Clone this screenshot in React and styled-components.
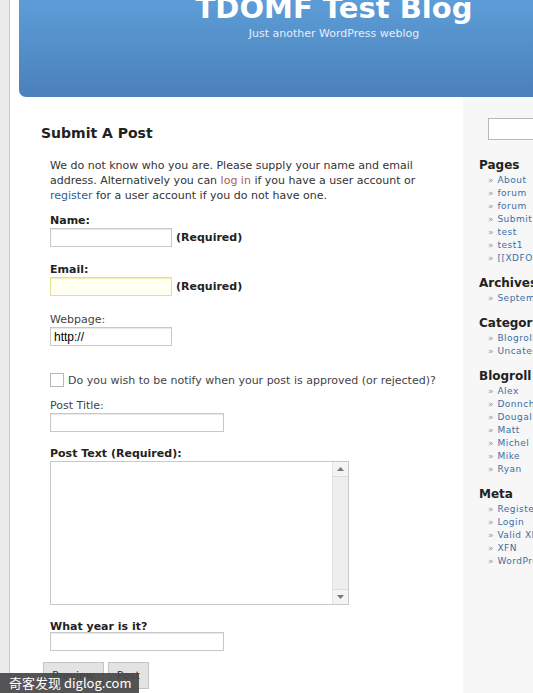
import React from 'react'
import styled, { createGlobalStyle } from 'styled-components'

const GlobalStyle = createGlobalStyle`
  html, body {
    margin: 0;
    padding: 0;
    background: #fff;
  }
  body {
    font-family: 'DejaVu Sans', Verdana, sans-serif;
    font-size: 11px;
    color: #333;
    height: 693px;
    overflow: hidden;
  }
`

const Page = styled.div`
  position: relative;
  display: flex;
  height: 693px;
  overflow: hidden;
`
const Strip = styled.div`
  width: 9px;
  flex: none;
  background: #ececec;
  border-right: 1px solid #c9c9c9;
`
const Wrap = styled.div`
  flex: 1;
  display: flex;
  flex-direction: column;
  min-width: 0;
`
const Header = styled.header`
  margin-left: 9px;
  height: 97px;
  flex: none;
  border-bottom-left-radius: 7px;
  background: linear-gradient(#5d9dd7, #4a80bb);
  display: flex;
  flex-direction: column;
  align-items: center;
  padding-left: 116px;
  box-sizing: border-box;
`
const Title = styled.h1`
  margin: -9px 0 0;
  font-family: 'DejaVu Sans', Verdana, sans-serif;
  font-weight: bold;
  font-size: 29px;
  line-height: 34px;
  color: #fff;
  white-space: nowrap;
`
const Tagline = styled.div`
  margin-top: 2px;
  font-size: 11px;
  color: #e4eef9;
`
const Body = styled.div`
  flex: 1;
  display: grid;
  grid-template-columns: 453px 1fr;
`
const Content = styled.main`
  padding: 28px 0 0 31px;
`
const Heading = styled.h2`
  margin: 0 0 16px;
  font-family: 'DejaVu Sans', Verdana, sans-serif;
  font-size: 14px;
  line-height: 17px;
  font-weight: bold;
  color: #222;
`
const Form = styled.form`
  padding-left: 9px;
  display: flex;
  flex-direction: column;
  align-items: flex-start;
`
const Intro = styled.p`
  margin: 0 0 10px;
  width: 380px;
  line-height: 15px;
`
const Link = styled.a`
  color: ${p => (p.$red ? '#b05a55' : '#2c5f94')};
  text-decoration: none;
`
const Label = styled.label`
  display: block;
  font-weight: ${p => (p.$bold ? 'bold' : 'normal')};
  color: ${p => (p.$bold ? '#222' : '#444')};
  line-height: 15px;
  margin-top: ${p => p.$gap || 0}px;
  margin-bottom: ${p => p.$after || 0}px;
`
const Row = styled.div`
  display: flex;
  align-items: center;
  gap: 4px;
`
const Input = styled.input`
  box-sizing: border-box;
  width: ${p => p.$w || 122}px;
  height: 19px;
  margin: 0;
  border: 1px solid ${p => (p.$focus ? '#e0e09a' : '#c8c8c8')};
  background: ${p => (p.$focus ? '#fffff2' : '#fff')};
  box-shadow: inset 0 1px 1px ${p => (p.$focus ? '#eeeeb0' : '#e8e8e8')};
  font-family: 'Liberation Sans', Arial, sans-serif;
  font-size: 12px;
  padding: 1px 3px;
  color: #000;
`
const Req = styled.span`
  font-weight: bold;
  color: #222;
`
const Check = styled.label`
  display: flex;
  align-items: center;
  gap: 4px;
  margin-top: 27px;
  color: #444;
`
const Box = styled.span`
  width: 12px;
  height: 12px;
  border: 1px solid #b8b8b8;
  background: #fff;
`
const TextBox = styled.div`
  width: 299px;
  height: 144px;
  box-sizing: border-box;
  border: 1px solid #c8c8c8;
  display: flex;
`
const TextArea = styled.textarea`
  flex: 1;
  border: none;
  resize: none;
  outline: none;
  margin: 0;
`
const Scroll = styled.div`
  width: 15px;
  background: #eeeeee;
  border-left: 1px solid #e4e4e4;
  display: flex;
  flex-direction: column;
  justify-content: space-between;
`
const Arrow = styled.div`
  height: 14px;
  background: #f4f4f4;
  display: flex;
  align-items: center;
  justify-content: center;
  border-bottom: ${p => (p.$up ? '1px solid #dcdcdc' : 'none')};
  border-top: ${p => (p.$up ? 'none' : '1px solid #dcdcdc')};
`
const Buttons = styled.div`
  display: flex;
  gap: 4px;
  margin: 11px 0 0 -7px;
`
const Button = styled.button`
  height: 27px;
  padding: 0 8px;
  background: #e3e3e3;
  border: 1px solid #c4c4c4;
  font-family: 'DejaVu Sans', Verdana, sans-serif;
  font-size: 11px;
  color: #333;
`
const Sidebar = styled.aside`
  background: #f7f7f7;
  padding: 21px 0 0 16px;
  overflow: hidden;
  white-space: nowrap;
`
const Search = styled.input`
  display: block;
  box-sizing: border-box;
  margin: 0 0 17px 9px;
  width: 80px;
  height: 22px;
  border: 1px solid #b8b8b8;
  background: #fff;
`
const SideTitle = styled.h3`
  margin: 0 0 1px;
  font-size: 12px;
  font-weight: bold;
  color: #222;
  line-height: 16px;
`
const List = styled.ul`
  list-style: none;
  margin: 0 0 10px;
  padding: 0 0 0 9px;
`
const Item = styled.li`
  font-size: 9px;
  line-height: 13px;
  letter-spacing: 0.5px;
  &::before {
    content: '» ';
    color: #999;
  }
  a {
    color: #3a6ea5;
    text-decoration: none;
  }
`
const Watermark = styled.div`
  position: absolute;
  left: 0;
  bottom: 0;
  width: 139px;
  height: 20px;
  background: rgba(70, 70, 70, 0.92);
  color: #fff;
  font-family: 'Noto Sans CJK SC', 'DejaVu Sans', sans-serif;
  font-size: 13px;
  line-height: 20px;
  padding-left: 9px;
  box-sizing: border-box;
  white-space: nowrap;
`

const sidebar = [
  ['Pages', ['About', 'forum', 'forum', 'Submit A Post', 'test', 'test1', '[[XDFORMS]]']],
  ['Archives', ['September 2007']],
  ['Categories', ['Blogroll', 'Uncategorized']],
  ['Blogroll', ['Alex', 'Donncha', 'Dougal', 'Matt', 'Michel', 'Mike', 'Ryan']],
  ['Meta', ['Register', 'Login', 'Valid XHTML', 'XFN', 'WordPress']]
]

const Tri = ({ up }) => (
  <svg width='7' height='4' viewBox='0 0 7 4'>
    <path d={up ? 'M0 4 L3.5 0 L7 4 Z' : 'M0 0 L3.5 4 L7 0 Z'} fill='#777' />
  </svg>
)

const App = () => {
  return (
    <Page>
      <GlobalStyle />
      <Strip />
      <Wrap>
        <Header>
          <Title>TDOMF Test Blog</Title>
          <Tagline>Just another WordPress weblog</Tagline>
        </Header>
        <Body>
          <Content>
            <Heading>Submit A Post</Heading>
            <Form>
              <Intro>
                We do not know who you are. Please supply your name and email
                address. Alternatively you can <Link $red href='#'>log in</Link> if
                you have a user account or <Link href='#'>register</Link> for a
                user account if you do not have one.
              </Intro>
              <Label $bold>Name:</Label>
              <Row>
                <Input />
                <Req>(Required)</Req>
              </Row>
              <Label $bold $gap={15}>Email:</Label>
              <Row>
                <Input $focus />
                <Req>(Required)</Req>
              </Row>
              <Label $gap={16}>Webpage:</Label>
              <Input defaultValue='http://' />
              <Check>
                <Box />
                Do you wish to be notify when your post is approved (or rejected)?
              </Check>
              <Label $gap={11}>Post Title:</Label>
              <Input $w={174} />
              <Label $bold $gap={14}>Post Text (Required):</Label>
              <TextBox>
                <TextArea />
                <Scroll>
                  <Arrow $up><Tri up /></Arrow>
                  <Arrow><Tri /></Arrow>
                </Scroll>
              </TextBox>
              <Label $bold $gap={14} $after={-2}>What year is it?</Label>
              <Input $w={174} />
              <Buttons>
                <Button type='button'>Preview</Button>
                <Button type='button'>Post</Button>
              </Buttons>
            </Form>
          </Content>
          <Sidebar>
            <Search />
            {sidebar.map(([title, items]) => (
              <div key={title}>
                <SideTitle>{title}</SideTitle>
                <List>
                  {items.map((item, i) => (
                    <Item key={i}><a href='#'>{item}</a></Item>
                  ))}
                </List>
              </div>
            ))}
          </Sidebar>
        </Body>
      </Wrap>
      <Watermark>奇客发现 diglog.com</Watermark>
    </Page>
  )
}

export default App
